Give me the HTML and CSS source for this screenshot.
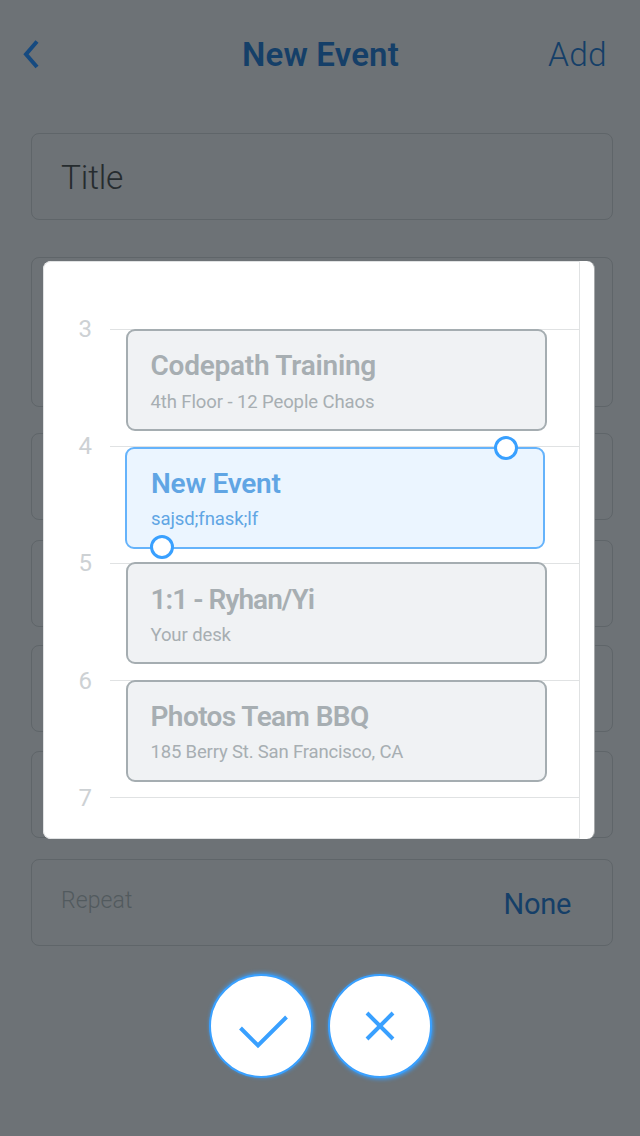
FILE: index.html
```html
<!DOCTYPE html>
<html lang="en">
<head>
<meta charset="utf-8">
<title>New Event</title>
<link rel="stylesheet" href="styles.css">
</head>
<body>
<main class="screen">
  <header class="nav">
    <svg class="back" width="16" height="30" viewBox="0 0 16 30"><path d="M14 1.5 3 14.2 14 27"/></svg>
    <h1 class="nav-title">New Event</h1>
    <span class="nav-add">Add</span>
  </header>
  <section class="form">
    <div class="field"><span class="field-title">Title</span></div>
    <div class="field notes"></div>
    <div class="field starts"></div>
    <div class="field ends"></div>
    <div class="field calendar"></div>
    <div class="field alert"></div>
    <div class="field repeat"><span class="repeat-label">Repeat</span><span class="repeat-value">None</span></div>
  </section>

  <section class="modal">
    <div class="day">
      <div class="hour"><span class="hour-label">3</span><div class="slot">
        <article class="event first"><h2 class="name codepath">Codepath Training</h2><p class="place floor">4th Floor - 12 People Chaos</p></article>
      </div></div>
      <div class="hour"><span class="hour-label">4</span><div class="slot">
        <article class="event active"><h2 class="name new">New Event</h2><p class="place note">sajsd;fnask;lf</p><i class="handle top"></i><i class="handle bottom"></i></article>
      </div></div>
      <div class="hour"><span class="hour-label">5</span><div class="slot">
        <article class="event third"><h2 class="name one">1:1 - Ryhan/Yi</h2><p class="place desk">Your desk</p></article>
      </div></div>
      <div class="hour"><span class="hour-label late">6</span><div class="slot">
        <article class="event last"><h2 class="name photos">Photos Team BBQ</h2><p class="place berry">185 Berry St. San Francisco, CA</p></article>
      </div></div>
      <div class="hour"><span class="hour-label late">7</span><div class="slot"></div></div>
    </div>
  </section>

  <footer class="actions">
    <div class="action confirm"><svg width="100" height="100" viewBox="0 0 100 100"><path d="M29.5 52 47 69.5 75.5 41"/></svg></div>
    <div class="action cancel"><svg width="100" height="100" viewBox="0 0 100 100"><path d="M37 37 63 63M63 37 37 63"/></svg></div>
  </footer>
</main>
</body>
</html>
```
FILE: styles.css
```css
* { box-sizing: border-box; }
body { margin: 0; background: #6d7276; font-family: Roboto, "Liberation Sans", sans-serif; }
h1, h2, p { margin: 0; }
.screen { position: relative; width: 640px; height: 1136px; overflow: hidden; }

.nav { display: grid; grid-template-columns: 100px 1fr 100px; align-items: center; height: 109px; padding: 0 33px 0 23px; color: #153f68; }
.back { fill: none; stroke: #164a80; stroke-width: 4; }
.nav-title { justify-self: center; margin-left: 11px; font-size: 33px; line-height: 40px; font-weight: 600; letter-spacing: .15px; white-space: nowrap; }
.nav-add { justify-self: end; font-size: 33.5px; line-height: 40px; font-weight: 300; letter-spacing: .3px; }

.form { display: flex; flex-direction: column; padding: 24px 27px 0 31px; }
.field { display: flex; align-items: center; height: 87px; padding: 0 41px 0 29px; border: 1px solid #5f6569; border-radius: 8px; }
.field-title { margin-top: 2px; font-size: 33.5px; line-height: 40px; font-weight: 300; letter-spacing: -.2px; color: #262c2f; }
.notes { height: 150px; margin-top: 37px; }
.starts { margin-top: 26px; }
.ends { margin-top: 20px; }
.calendar { margin-top: 18px; }
.alert { margin-top: 19px; }
.repeat { margin-top: 21px; justify-content: space-between; }
.repeat-label { font-size: 23px; line-height: 30px; font-weight: 300; letter-spacing: .1px; color: #525a5e; margin-bottom: 4px; }
.repeat-value { font-size: 29px; line-height: 36px; font-weight: 400; letter-spacing: -.3px; color: #153f68; margin-top: 3px; }

.modal { position: absolute; left: 43px; top: 261px; width: 552px; height: 578px; padding-right: 14px; background: #fff; border-radius: 8px; overflow: hidden; border-right: 1px solid #a5a8aa; }
.day { height: 578px; padding-top: 67px; border: 1px solid #e0e2e3; border-radius: 8px 0 0 8px; }
.hour { display: grid; grid-template-columns: 66px 1fr; height: 117px; }
.hour-label { padding-left: 34.5px; margin-top: -15px; font-size: 24px; line-height: 30px; font-weight: 400; color: #cdd1d4; }
.late { margin-top: -14px; }
.slot { border-top: 1px solid #e0e2e3; }
.event { position: relative; width: 421px; height: 102px; margin: -1px 0 0 16px; padding: 19px 0 0 22.5px; border: 2px solid #a5adb1; border-radius: 9px; background: #f0f2f4; color: #a7aeb2; }
.third { margin-top: -2px; padding-top: 20px; }
.name { font-size: 28px; line-height: 32px; font-weight: 600; white-space: nowrap; }
.place { margin-top: 7px; font-size: 18.5px; line-height: 24px; font-weight: 450; letter-spacing: -.1px; white-space: nowrap; }
.floor { margin-top: 8px; }
.codepath { letter-spacing: -.25px; }
.new { letter-spacing: -.25px; }
.one { letter-spacing: -.95px; }
.photos { letter-spacing: -.6px; }
.berry { letter-spacing: -.17px; }
.active { width: 420px; margin: 0 0 0 15px; padding-left: 24px; border-color: #65b3fb; background: #ebf5ff; color: #60a5e4; }
.handle { position: absolute; width: 24px; height: 24px; border: 3px solid #39a0ff; border-radius: 50%; background: #fff; }
.handle.top { left: 367px; top: -13px; }
.handle.bottom { left: 23px; top: 86px; }

.actions { position: absolute; left: 209px; top: 974px; display: flex; gap: 15px; }
.action { width: 104px; height: 104px; border: 2px solid #39a0ff; border-radius: 50%; background: #fff; }
.action svg { display: block; fill: none; stroke: #39a0ff; stroke-width: 4; }
.confirm { box-shadow: 1px -1px 4px #39a0ff; }
.cancel { box-shadow: 1px 1px 4px #39a0ff; }
```
